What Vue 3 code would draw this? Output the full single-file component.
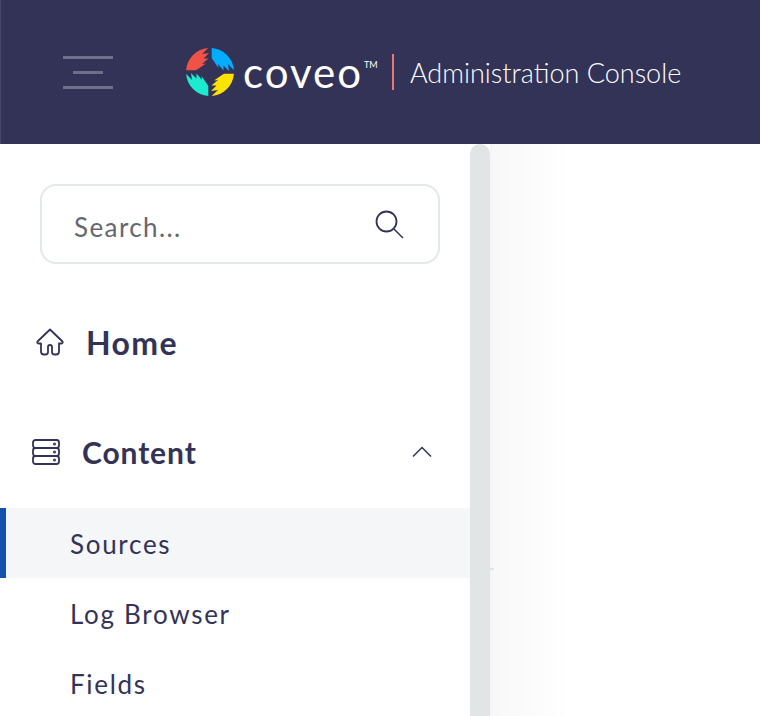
<script setup>
const subItems = [
  { label: 'Sources', active: true },
  { label: 'Log Browser', active: false },
  { label: 'Fields', active: false }
]

const logoParts = [
  { color: '#f05245', angle: 0 },
  { color: '#00adff', angle: 90 },
  { color: '#ffe300', angle: 180 },
  { color: '#1cebcf', angle: 270 }
]
</script>

<template>
  <div class="page">
    <header class="header">
      <button class="burger" aria-label="Menu">
        <span class="line"></span>
        <span class="line short"></span>
        <span class="line"></span>
      </button>
      <div class="brand">
        <svg class="logo" viewBox="0 0 48 48" width="48" height="48">
          <path
            v-for="part in logoParts"
            :key="part.color"
            :fill="part.color"
            :transform="`rotate(${part.angle} 24 24)`"
            d="M22.300 .1 16 6 23 5 17.500 10.500 22.500 10.500 16 16 20 15.500 12 21 10 22.300H.1A24 24 0 0 1 22.300 .1z"
          />
        </svg>
        <span class="wordmark">coveo</span>
        <span class="tm">TM</span>
        <span class="divider"></span>
        <span class="console">Administration Console</span>
      </div>
    </header>

    <div class="body">
      <aside class="sidebar">
        <div class="search">
          <span class="placeholder">Search...</span>
          <svg viewBox="0 0 30 30" width="30" height="30" fill="none" stroke="#333357">
            <circle cx="12.500" cy="12.500" r="10" stroke-width="1.800" />
            <path d="M20 20l9 9" stroke-width="1.500" />
          </svg>
        </div>

        <a class="home">
          <svg viewBox="0 0 28 28" width="28" height="28" fill="none" stroke="#333357" stroke-width="1.800" stroke-linejoin="round">
            <path d="M14 1.500 1.500 13.500c-.6 1 0 2 1 2H5v8c0 2 1 3 3 3h1.500c1.500 0 2.500-1 2.500-2.500V19c0-1.300 1-2 2-2s2 .7 2 2v5c0 1.500 1 2.500 2.500 2.500H20c2 0 3-1 3-3v-8h2.500c1 0 1.600-1 1-2z" />
          </svg>
          <span>Home</span>
        </a>

        <div class="section">
          <svg viewBox="0 0 28 26" width="28" height="26" fill="none" stroke="#333357" stroke-width="1.800">
            <rect x="1" y="1" width="26" height="8" rx="2.500" />
            <rect x="1" y="9" width="26" height="8" rx="2.500" />
            <rect x="1" y="17" width="26" height="8" rx="2.500" />
            <circle cx="22.500" cy="5" r=".6" />
            <circle cx="22.500" cy="13" r=".6" />
            <circle cx="22.500" cy="21" r=".6" />
          </svg>
          <span class="section-title">Content</span>
          <svg class="chevron" viewBox="0 0 20 11" width="20" height="11" fill="none" stroke="#333357" stroke-width="1.500">
            <path d="M1 10.500 10 1.500l9 9" />
          </svg>
        </div>

        <nav class="subnav">
          <a v-for="item in subItems" :key="item.label" class="subitem" :class="{ active: item.active }">{{ item.label }}</a>
        </nav>
      </aside>
      <div class="scrollbar"></div>
      <main class="content"><span class="tick"></span></main>
    </div>
  </div>
</template>

<style>
html,
body {
  margin: 0;
  background: #fff;
  overflow: hidden;
}
</style>

<style scoped>
.page {
  width: 760px;
  height: 716px;
  overflow: hidden;
  display: flex;
  flex-direction: column;
  font-family: Lato, "Liberation Sans", sans-serif;
  color: #333357;
}

.header {
  flex: 0 0 144px;
  display: flex;
  align-items: center;
  box-sizing: border-box;
  border-left: 1px solid #47476a;
  background: #333357;
  color: #fff;
}

.burger {
  display: flex;
  flex-direction: column;
  align-items: center;
  gap: 12px;
  width: 50px;
  margin-left: 62px;
  padding: 0;
  border: 0;
  background: none;
}

.line {
  width: 50px;
  height: 3px;
  background: #6f6f89;
}

.line.short {
  width: 30px;
}

.brand {
  display: flex;
  align-items: center;
  margin-left: 73px;
}

.logo {
  flex: none;
}

.wordmark {
  margin-left: 9px;
  font-size: 42px;
  letter-spacing: 2px;
  line-height: 46px;
}

.tm {
  align-self: flex-start;
  margin: 11px 0 0 1px;
  width: 14px;
  font-size: 9px;
  line-height: 12px;
}

.divider {
  width: 2px;
  height: 36px;
  margin-left: 14px;
  background: #e9796f;
}

.console {
  margin-left: 16px;
  font-size: 27px;
  font-weight: 300;
  white-space: nowrap;
}

.body {
  flex: 1;
  display: flex;
  min-height: 0;
}

.sidebar {
  width: 470px;
  flex: none;
  background: #fff;
}

.search {
  display: flex;
  align-items: center;
  justify-content: space-between;
  box-sizing: border-box;
  width: 400px;
  height: 80px;
  margin: 40px 0 0 40px;
  padding: 0 34px 0 32px;
  border: 2px solid #e5e8e8;
  border-radius: 16px;
  font-size: 26px;
  color: #67676f;
}

.placeholder {
  padding-top: 6px;
  letter-spacing: 1.400px;
}

.home {
  display: flex;
  align-items: center;
  gap: 22px;
  height: 40px;
  margin: 58px 0 0 36px;
  font-size: 32px;
  font-weight: 700;
  letter-spacing: 1.400px;
}

.section {
  display: flex;
  align-items: center;
  gap: 22px;
  height: 40px;
  margin: 70px 0 0 32px;
  padding-right: 38px;
}

.section-title {
  flex: 1;
  font-size: 30px;
  font-weight: 700;
  letter-spacing: .9px;
}

.chevron {
  margin-top: -1px;
}

.subnav {
  margin-top: 36px;
}

.subitem {
  display: block;
  height: 70px;
  padding-left: 70px;
  font-size: 26px;
  line-height: 72px;
  letter-spacing: 1.700px;
}

.subitem.active {
  padding-left: 64px;
  background: #f5f6f8;
  border-left: 6px solid #1650ae;
}

.scrollbar {
  width: 20px;
  flex: none;
  background: #e1e5e6;
  border-radius: 10px 10px 0 0;
}

.content {
  flex: 1;
  position: relative;
  background: linear-gradient(90deg, #f4f4f4, #f8f8f8 4px, #fff 80px);
}

.tick {
  position: absolute;
  left: 0;
  top: 424px;
  width: 4px;
  height: 2px;
  background: #e1e5e6;
}
</style>
